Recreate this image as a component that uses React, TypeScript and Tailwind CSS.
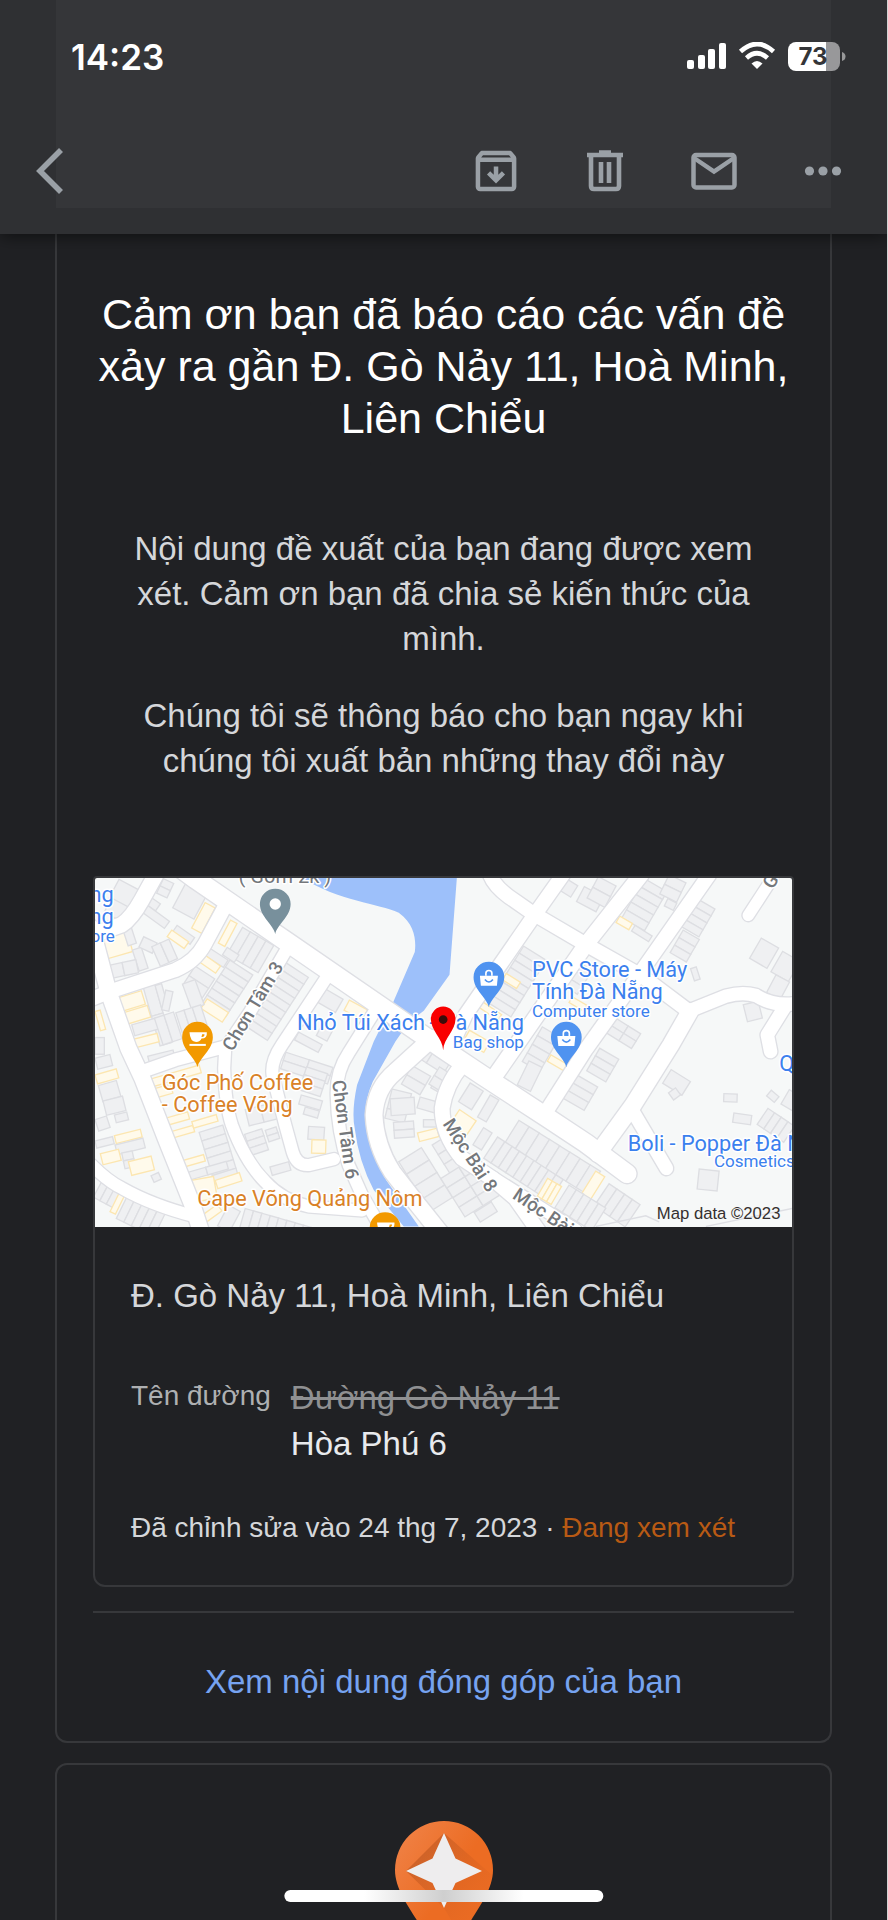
import type { ReactNode } from "react";

type Block = [x: number, y: number, angle: number, w: number, h: number, cols: number, rows: number, shop?: boolean];

const BLOCKS: Block[] = [
  [72, 4, 28, 80, 72, 1, 1], [50, 60, 28, 60, 48, 1, 1],
  [205, 2, 25, 34, 24, 1, 2], [168, 58, 35, 34, 26, 1, 1], [152, 78, 36, 88, 26, 1, 1],
  [276, 8, 28, 72, 92, 1, 1], [330, 74, 28, 34, 86, 1, 1, true], [406, 126, 28, 22, 78, 1, 1, true],
  [246, 142, 35, 64, 24, 1, 1], [230, 156, 35, 62, 24, 1, 1, true],
  [14, 180, -16, 84, 66, 1, 1, true], [82, 150, -18, 26, 56, 1, 1], [112, 216, -18, 28, 66, 1, 1],
  [40, 262, -12, 42, 40, 2, 1], [146, 176, 25, 44, 34, 1, 1], [170, 206, -24, 28, 64, 2, 1],
  [442, 148, 30, 27, 94, 4, 1], [396, 208, 33, 42, 26, 1, 1], [340, 208, 33, 70, 26, 1, 1],
  [322, 226, 35, 66, 26, 1, 1, true], [404, 246, 33, 82, 25, 1, 6], [300, 264, 33, 70, 34, 1, 2],
  [336, 362, 33, 76, 34, 1, 1, true],
  [572, 254, 33, 80, 25, 1, 9], [686, 330, 30, 66, 46, 1, 1], [762, 366, 28, 62, 34, 1, 1, true],
  [610, 462, 28, 80, 26, 1, 1], [680, 440, 28, 36, 36, 1, 1],
  [66, 360, -17, 76, 42, 1, 1, true], [84, 404, -17, 76, 36, 1, 1, true], [144, 326, -16, 36, 92, 1, 2],
  [180, 322, -16, 20, 74, 1, 1], [212, 336, 12, 22, 60, 1, 1], [262, 318, -20, 40, 80, 1, 1],
  [110, 440, -16, 74, 34, 1, 1], [112, 484, -14, 76, 26, 1, 1, true], [178, 420, -18, 30, 84, 2, 1], [242, 404, -18, 26, 62, 3, 1],
  [0, 400, -16, 16, 60, 1, 1, true], [0, 478, 0, 28, 50, 1, 1],
  [158, 534, -14, 78, 34, 1, 1], [0, 590, -16, 66, 28, 1, 1, true], [0, 540, -14, 46, 34, 1, 1],
  [10, 622, -16, 56, 50, 1, 1], [24, 668, -14, 60, 44, 1, 1], [58, 710, -14, 38, 24, 1, 1], [0, 724, -18, 36, 36, 1, 1],
  [160, 604, -16, 158, 24, 1, 1, true], [168, 634, -16, 60, 28, 1, 1, true],
  [210, 720, -16, 70, 22, 1, 1, true], [220, 762, -16, 76, 20, 1, 1, true], [290, 730, -16, 76, 20, 1, 1, true],
  [58, 772, -14, 80, 24, 1, 1, true], [60, 800, -14, 86, 30, 1, 1], [0, 788, -14, 54, 22, 1, 1],
  [16, 826, -14, 56, 34, 1, 1, true], [80, 824, -12, 32, 24, 1, 2], [100, 850, -14, 70, 42, 1, 1, true], [168, 892, -24, 24, 22, 1, 1],
  [312, 762, -17, 74, 27, 1, 6], [250, 850, -16, 78, 20, 1, 1, true], [270, 884, -16, 64, 24, 2, 1],
  [286, 906, -10, 70, 66, 1, 1, true], [360, 906, -18, 76, 26, 1, 1, true],
  [450, 694, -14, 46, 50, 2, 1], [448, 768, -18, 54, 22, 1, 3], [510, 756, -18, 34, 18, 1, 2],
  [572, 522, 18, 74, 26, 2, 2], [634, 566, 18, 66, 24, 1, 3], [618, 650, 16, 66, 28, 1, 1], [630, 686, 16, 44, 22, 1, 1],
  [640, 744, 4, 48, 38, 1, 1], [650, 784, 2, 42, 40, 1, 1, true], [524, 866, -16, 58, 26, 1, 1],
  [26, 898, 28, 22, 66, 3, 1], [74, 940, 26, 18, 66, 1, 1, true], [98, 950, 26, 25, 78, 5, 1],
  [316, 1014, -36, 62, 24, 1, 1, true], [400, 980, 28, 40, 70, 1, 1], [450, 990, 16, 26, 60, 12, 1],
  [890, 632, 14, 60, 30, 1, 3], [884, 662, -4, 72, 50, 1, 1], [894, 732, -4, 60, 24, 1, 2], [950, 562, 30, 64, 32, 1, 2],
  [1020, 604, 30, 46, 28, 1, 1], [974, 656, 16, 60, 34, 1, 1], [966, 764, -14, 60, 26, 1, 1, true], [984, 724, 0, 42, 22, 1, 1],
  [910, 850, -32, 80, 44, 1, 4], [1010, 800, -32, 60, 34, 1, 8], [1036, 900, -32, 64, 34, 2, 4],
  [962, 490, 32, 60, 38, 2, 1], [1032, 566, 32, 50, 30, 1, 2],
  [1380, -18, 32, 78, 40, 1, 1], [1466, 26, 28, 66, 50, 1, 1], [1508, -4, 28, 60, 36, 1, 2],
  [1646, 2, 30, 78, 27, 1, 5], [1572, 114, 30, 44, 22, 1, 1, true], [1618, 142, 32, 60, 20, 1, 1],
  [1720, -10, 26, 56, 32, 1, 2], [1716, 62, 26, 30, 24, 1, 1], [1800, 60, 30, 66, 24, 1, 4], [1762, 156, 30, 56, 26, 1, 3],
  [1284, 204, 32, 80, 25, 1, 8], [1232, 286, 32, 50, 22, 1, 1, true], [1430, 240, 32, 70, 28, 1, 3],
  [1160, 370, 34, 70, 20, 1, 1, true], [1122, 456, 30, 70, 36, 1, 1, true], [1340, 446, 30, 60, 30, 1, 4],
  [1366, 530, 30, 56, 22, 1, 1, true], [1300, 548, 26, 44, 80, 1, 1], [1512, 510, 30, 66, 26, 1, 3], [1440, 588, 30, 76, 27, 1, 3],
  [1560, 420, 32, 44, 26, 2, 2], [1430, 356, 30, 50, 20, 1, 1, true],
  [1784, 272, -18, 18, 38, 1, 1], [1996, 180, 30, 60, 70, 1, 1], [2060, 220, 30, 60, 70, 1, 1], [2040, 290, 28, 46, 60, 1, 1], [1942, 380, -14, 46, 52, 1, 1],
  [1726, 574, 32, 68, 48, 1, 1], [1718, 644, -36, 26, 26, 1, 1], [1884, 646, 2, 40, 24, 1, 1], [1914, 704, 8, 54, 28, 1, 1],
  [2026, 636, 40, 30, 22, 1, 1], [2080, 634, 30, 40, 50, 1, 1], [2016, 690, 34, 24, 58, 4, 1], [1810, 872, 6, 60, 60, 1, 1],
  [1124, 614, 32, 46, 66, 1, 1], [1184, 650, 30, 30, 76, 1, 1], [1092, 694, 34, 60, 52, 1, 1, true],
  [1164, 748, 32, 30, 60, 1, 1], [1270, 726, 32, 36, 80, 8, 1], [1206, 776, 33, 26, 76, 9, 1],
  [1356, 900, 30, 16, 62, 3, 1, true], [1500, 878, 32, 32, 80, 1, 1, true], [1460, 956, 32, 22, 70, 1, 1, true],
  [1540, 916, 34, 28, 80, 4, 1], [1420, 920, 32, 26, 80, 5, 1],
];

const ROADS: [width: number, d: string][] = [
  [46, "M182-10 140 66Q110 120 80 140L-10 172"],
  [42, "M392 80 330 196Q300 252 240 276L50 338-10 362"],
  [48, "M-10 150 40 340 100 510 142 600 212 780 292 980 316 1054"],
  [36, "M-10 860Q40 910 82 930 170 980 300 1014"],
  [36, "M582 200 465 400 390 512 387 570Q390 680 410 740 450 850 510 910 560 965 640 984L800 996"],
  [38, "M135 582 240 545 388 506"],
  [36, "M695 296 560 500Q526 550 532 590L570 740 592 820Q604 862 640 860L716 842"],
  [36, "M840 396 760 524Q722 580 724 650 726 760 760 860L800 950 860 1054"],
  [50, "M1010 480 900 580Q840 630 836 710 840 800 890 880L960 970 1040 1070"],
  [44, "M1100 560Q1050 620 1040 690 1040 770 1100 840L1190 900 1260 960 1330 1060"],
  [36, "M1190 896 1440 1054"],
  [42, "M1180-20Q1190 20 1240 56L1312 106 1472 200 1640 295 1780 400"],
  [42, "M1402-10 1320 106 1110 410 1060 520"],
  [46, "M1636-10 1470 200 1262 501 1186 610"],
  [42, "M1840-10 1630 290 1472 511 1345 710"],
  [50, "M1782 400 1725 500 1612 680 1506 826"],
  [40, "M1780 398 1890 354Q1940 340 1980 352 2030 385 2100 376"],
  [40, "M2070 380 2014 470 2024 520"],
  [40, "M1606 690 1712 870"],
  [34, "M2030 0 1957 112"],
  [56, "M250-34 302 4 582 196 1042 512 1162 592 1352 716 1470 794 1594 886"],
];

interface MapLabelProps {
  x: number;
  y: number;
  size: number;
  color?: string;
  angle?: number;
  children: ReactNode;
}

function MapLabel({ x, y, size, color = "#3b80ee", angle = 0, children }: MapLabelProps) {
  return (
    <text
      transform={`translate(${x} ${y}) rotate(${angle})`}
      fontSize={size}
      fontWeight={angle ? 500 : 400}
      fill={color}
      stroke="#fff"
      strokeWidth={9}
      strokeLinejoin="round"
      paintOrder="stroke"
    >
      {children}
    </text>
  );
}

function Pin({ x, y, color, children }: { x: number; y: number; color: string; children: ReactNode }) {
  return (
    <g transform={`translate(${x} ${y})`}>
      <path d="M0 90C-5 62-46 38-46 0A46 46 0 0 1 46 0C46 38 5 62 0 90Z" fill={color} />
      {children}
    </g>
  );
}

function Cup() {
  return (
    <>
      <path d="M-24-15H28Q30 4 12 4 8 14-4 14-22 14-24-15ZM14-9 12-1Q21 0 21-9Z" fill="#fff" fillRule="evenodd" />
      <path d="M-24 20H25V26H-24Z" fill="#fff" />
    </>
  );
}

function Bag() {
  return (
    <>
      <path d="M-27-4H27L24 26H-24Z" fill="#fff" />
      <path d="M-9-4V-12Q-9-20 0-20 9-20 9-12V-4" fill="none" stroke="#fff" strokeWidth="5" />
      <path d="M-12 7Q0 22 12 7" fill="none" stroke="#4f93f0" strokeWidth="5" />
    </>
  );
}

function StreetMap() {
  return (
    <svg viewBox="0 0 2088 1044" className="block w-full bg-[#f6f8f8] font-[Roboto,sans-serif]" role="img" aria-label="Đ. Gò Nảy 11">
      <path
        d="M622 0C730 70 850 76 910 104 960 140 962 190 958 222L890 380 835 490 785 620Q768 700 778 750 790 850 835 935L925 1044H970L872 905Q820 800 812 720 806 670 832 610L900 490 940 432 985 398 1062 290 1084 0Z"
        fill="#9dc0fa"
      />
      <g strokeWidth="4">
        {BLOCKS.map(([x, y, angle, w, h, cols, rows, shop], i) => (
          <g key={i} transform={`translate(${x} ${y}) rotate(${angle})`} fill={shop ? "#fffaeb" : "#eff0f2"} stroke={shop ? "#fce6b0" : "#dddee2"}>
            {Array.from({ length: cols * rows }, (_, n) => (
              <rect key={n} x={(n % cols) * w} y={Math.floor(n / cols) * h} width={w} height={h} />
            ))}
          </g>
        ))}
      </g>
      <g fill="none" strokeLinecap="round" strokeLinejoin="round" stroke="#dedfe4">
        {ROADS.map(([width, d]) => <path key={d} d={d} strokeWidth={width + 8} />)}
      </g>
      <g fill="none" strokeLinecap="round" strokeLinejoin="round" stroke="#fff">
        {ROADS.map(([width, d]) => <path key={d} d={d} strokeWidth={width} />)}
      </g>
      <path d="M1500 1044 1650 1012 1690 1030M1830 1044 2088 990" fill="none" stroke="#dedfe4" strokeWidth="4" />

      <MapLabel x={430} y={14} size={60} color="#74777b">( Gom 2k )</MapLabel>
      <MapLabel x={-52} y={72} size={65}>ang</MapLabel>
      <MapLabel x={-52} y={138} size={65}>ang</MapLabel>
      <MapLabel x={-60} y={192} size={51}>Store</MapLabel>
      <MapLabel x={412} y={522} size={56} color="#74777b" angle={-59}>Chơn Tâm 3</MapLabel>
      <MapLabel x={710} y={608} size={56} color="#74777b" angle={82}>Chơn Tâm 6</MapLabel>
      <MapLabel x={1040} y={736} size={56} color="#74777b" angle={57}>Mộc Bài 8</MapLabel>
      <MapLabel x={1248} y={958} size={56} color="#74777b" angle={34}>Mộc Bài 9</MapLabel>
      <MapLabel x={2030} y={36} size={56} color="#74777b" angle={-59}>Gò</MapLabel>
      <MapLabel x={605} y={455} size={65}>Nhỏ Túi Xách</MapLabel>
      <MapLabel x={1002} y={455} size={65}>- Đà Nẵng</MapLabel>
      <MapLabel x={1072} y={509} size={51}>Bag shop</MapLabel>
      <MapLabel x={1309} y={296} size={65}>PVC Store - Máy</MapLabel>
      <MapLabel x={1309} y={362} size={65}>Tính Đà Nẵng</MapLabel>
      <MapLabel x={1309} y={417} size={51}>Computer store</MapLabel>
      <MapLabel x={1596} y={817} size={65}>Boli - Popper Đà Nẵng</MapLabel>
      <MapLabel x={1854} y={867} size={51}>Cosmetics</MapLabel>
      <MapLabel x={2050} y={577} size={65}>Q</MapLabel>
      <MapLabel x={200} y={636} size={65} color="#d98127">Góc Phố Coffee</MapLabel>
      <MapLabel x={200} y={701} size={65} color="#d98127">- Coffee Võng</MapLabel>
      <MapLabel x={306} y={984} size={65} color="#d98127">Cape Võng Quảng Nôm</MapLabel>
      <text x={1683} y={1023} fontSize={50} fill="#35302f" fontFamily="Liberation Sans, sans-serif">Map data ©2023</text>

      <Pin x={540} y={78} color="#78909c"><circle r="17" fill="#fff" /></Pin>
      <Pin x={307} y={477} color="#f29900"><Cup /></Pin>
      <Pin x={869} y={1047} color="#f29900"><Cup /></Pin>
      <Pin x={1180} y={297} color="#4f93f0"><Bag /></Pin>
      <Pin x={1412} y={477} color="#4f93f0"><Bag /></Pin>
      <path d="M1043 516C1041 480 1006 458 1006 422A37 37 0 0 1 1080 422C1080 458 1045 480 1043 516Z" fill="#f90000" />
      <circle cx="1043" cy="424" r="13" fill="#3a0d0a" />
    </svg>
  );
}

function StatusIcons() {
  return (
    <svg viewBox="0 0 160 30" className="h-[30px] w-40" role="img" aria-label="73%">
      <g fill="#fff">
        <rect x="1" y="18" width="7" height="9" rx="2" />
        <rect x="12" y="13" width="7" height="14" rx="2" />
        <rect x="22" y="7" width="7" height="20" rx="2" />
        <rect x="33" y="1" width="7" height="26" rx="2" />
        <path d="M71 27 65.5 21.5Q71 16.5 76.5 21.5Z" />
      </g>
      <g fill="none" stroke="#fff" strokeWidth="4.6">
        <path d="M54.500 9.500Q71-5.500 87.500 9.500" />
        <path d="M60.500 16Q71 6.500 81.500 16" />
      </g>
      <clipPath id="cell"><rect x="102" y="0" width="52" height="29" rx="8" /></clipPath>
      <g clipPath="url(#cell)">
        <rect x="102" width="38" height="29" fill="#fff" />
        <rect x="140" width="14" height="29" fill="#98989a" />
      </g>
      <path d="M156 10Q159.500 11 159.500 14.500 159.500 18 156 19Z" fill="#98989a" />
      <text x="127" y="23" textAnchor="middle" fontSize="24" fontWeight="700" fill="#343538" fontFamily="Inter, sans-serif">73</text>
    </svg>
  );
}

function ToolbarButton({ label, children }: { label: string; children: ReactNode }) {
  return (
    <button type="button" aria-label={label} className="flex size-12 items-center justify-center">
      <svg viewBox="0 0 48 48" className="size-12" fill="none" stroke="#9aa0a6" strokeWidth="5">
        {children}
      </svg>
    </button>
  );
}

function Header() {
  return (
    <header className="relative z-10 shrink-0 bg-[#2f3033] shadow-[0_2px_16px_rgb(0_0_0/55%)]">
      <div className="absolute inset-x-14 top-0 bottom-[26px] bg-[#353639]" />
      <div className="relative flex items-center justify-between pt-[37px] pr-[41px] pl-[71px]">
        <span className="font-[Inter,sans-serif] text-[35px] leading-10 font-semibold text-white">14:23</span>
        <StatusIcons />
      </div>
      <div className="relative flex items-center justify-between pt-[70px] pr-10 pb-[39px] pl-[26px]">
        <ToolbarButton label="Quay lại">
          <path d="M35 3 14 24 35 45" strokeWidth="5.6" />
        </ToolbarButton>
        <div className="flex items-center gap-[61px]">
          <ToolbarButton label="Lưu trữ">
            <path
              transform="translate(-3.1 -3.1) scale(2.26)"
              d="M20.54 5.23l-1.39-1.68C18.88 3.21 18.47 3 18 3H6c-.47 0-.88.21-1.16.55L3.46 5.23C3.17 5.57 3 6.02 3 6.5V19c0 1.1.9 2 2 2h14c1.1 0 2-.9 2-2V6.5c0-.48-.17-.93-.46-1.27zM6.24 5h11.52l.83 1H5.42l.82-1zM5 19V8h14v11H5zm11-5.5l-4 4-4-4 1.41-1.41L11 13.67V10h2v3.67l1.59-1.58L16 13.5z"
              fill="#9aa0a6"
              stroke="none"
            />
          </ToolbarButton>
          <ToolbarButton label="Xoá">
            <path d="M10 8V39Q10 42 13 42H35Q38 42 38 39V8M6 8H42M18 5.500H30M20 15V36M28 15V36" strokeWidth="4.6" />
          </ToolbarButton>
          <ToolbarButton label="Đánh dấu là chưa đọc">
            <rect x="3.5" y="8" width="41" height="32.5" rx="2.5" strokeWidth="4.5" />
            <path d="M4 11 24 24.500 44 11" strokeWidth="4.5" />
          </ToolbarButton>
          <ToolbarButton label="Thêm">
            <g fill="#9aa0a6" stroke="none">
              <circle cx="10.5" cy="24" r="4.6" />
              <circle cx="24" cy="24" r="4.6" />
              <circle cx="37.5" cy="24" r="4.6" />
            </g>
          </ToolbarButton>
        </div>
      </div>
    </header>
  );
}

function GuidePin() {
  return (
    <svg viewBox="0 0 98 144" className="w-[98px]" aria-hidden="true">
      <defs>
        <linearGradient id="pin" x1="0" y1="0" x2="1" y2="1">
          <stop offset="0" stopColor="#f0844a" />
          <stop offset="0.5" stopColor="#ec6c23" />
        </linearGradient>
        <linearGradient id="shade" x1="0" y1="0" x2="1" y2="1">
          <stop offset="0.2" stopColor="#bb551f" />
          <stop offset="1" stopColor="#ec6c23" stopOpacity="0" />
        </linearGradient>
      </defs>
      <path d="M49 144 23 101C14 86 0 68 0 49A49 49 0 0 1 98 49C98 68 84 86 75 101Z" fill="url(#pin)" />
      <path d="M49 12 97 54Q94 72 82 90L66 116 49 87 11 50Z" fill="url(#shade)" opacity="0.6" />
      <path d="M49 12 60.500 37.500 87 50 60.500 62 49 87 37.500 62 11 50 37.500 37.500Z" fill="#eeedee" />
    </svg>
  );
}

export default function App() {
  return (
    <div className="relative flex h-screen flex-col overflow-hidden border-r border-[#d5d5d6] bg-[#202124] font-['Liberation_Sans',sans-serif] text-[#d5d7da]">
      <Header />
      <main className="flex flex-col gap-5 px-[55px]">
        <section className="rounded-b-xl border-2 border-t-0 border-[#37383b] px-9 pt-[54px]">
          <h1 className="text-center text-[43px] leading-[52px] text-white">
            Cảm ơn bạn đã báo cáo các vấn đề xảy ra gần Đ. Gò Nảy 11, Hoà Minh, Liên Chiểu
          </h1>
          <div className="mt-[82px] space-y-8 px-6 text-center text-[33px] leading-[45px]">
            <p>Nội dung đề xuất của bạn đang được xem xét. Cảm ơn bạn đã chia sẻ kiến thức của mình.</p>
            <p>Chúng tôi sẽ thông báo cho bạn ngay khi chúng tôi xuất bản những thay đổi này</p>
          </div>
          <article className="mt-[93px] overflow-hidden rounded-xl rounded-t-sm border-2 border-[#37383b]">
            <StreetMap />
            <div className="px-9 pt-[46px] pb-9">
              <h2 className="text-[33px] leading-[46px]">Đ. Gò Nảy 11, Hoà Minh, Liên Chiểu</h2>
              <dl className="mt-14 flex gap-5">
                <dt className="text-[28px] leading-[42px] text-[#aeb0b2]">Tên đường</dt>
                <dd className="text-[33px] leading-[46px]">
                  <del className="block text-[#8f9092]">Đường Gò Nảy 11</del>
                  <ins className="block text-[#e8eaed] no-underline">Hòa Phú 6</ins>
                </dd>
              </dl>
              <p className="mt-10 text-[28px] leading-[42px]">
                Đã chỉnh sửa vào 24 thg 7, 2023 · <span className="text-[#b85a14]">Đang xem xét</span>
              </p>
            </div>
          </article>
          <hr className="mt-6 border-t-2 border-[#37383b]" />
          <p className="pt-[46px] pb-9 text-center text-[33px] leading-[46px]">
            <a href="#contributions" className="text-[#76a3f0]">Xem nội dung đóng góp của bạn</a>
          </p>
        </section>
        <section className="flex justify-center rounded-t-xl border-2 border-b-0 border-[#37383b] pt-14">
          <GuidePin />
        </section>
      </main>
      <div className="absolute bottom-[18px] left-1/2 h-3 w-[36%] -translate-x-1/2 rounded-full bg-linear-to-r from-white from-25% via-[#cfcfcf] to-white to-75%" />
    </div>
  );
}
